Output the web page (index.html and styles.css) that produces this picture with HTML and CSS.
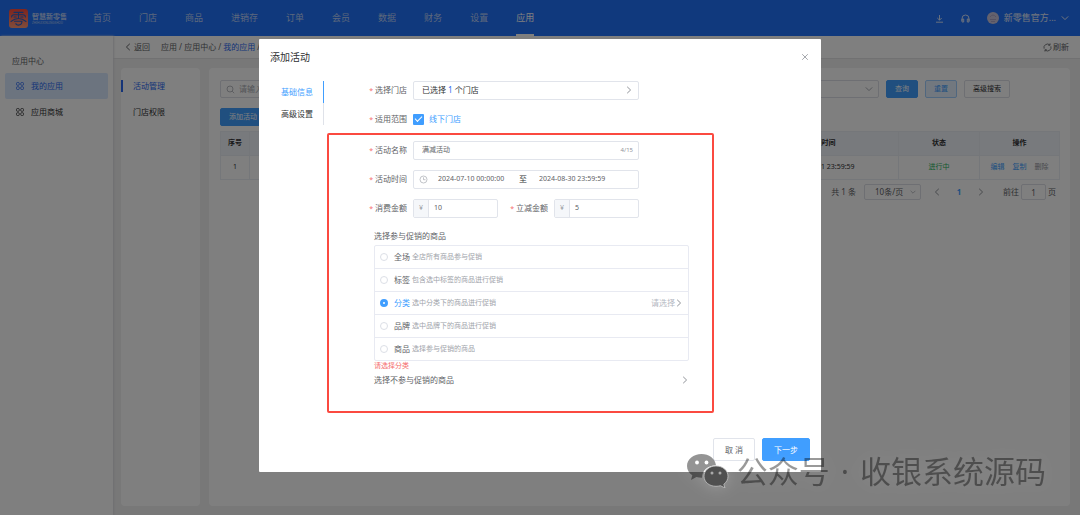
FILE: index.html
```html
<!DOCTYPE html>
<html lang="zh-CN">
<head>
<meta charset="utf-8">
<meta name="viewport" content="width=device-width, initial-scale=1">
<title>添加活动</title>
<link rel="stylesheet" href="styles.css">
</head>
<body>
<svg class="defs" width="0" height="0" aria-hidden="true">
  <symbol id="grid" viewBox="0 0 16 16"><g fill="none" stroke="currentColor" stroke-width="1.6"><rect x="1" y="1" width="5.6" height="5.6" rx="2"/><rect x="9.4" y="1" width="5.6" height="5.6" rx="2"/><rect x="1" y="9.4" width="5.6" height="5.6" rx="2"/><rect x="9.4" y="9.4" width="5.6" height="5.6" rx="2"/></g></symbol>
  <symbol id="right" viewBox="0 0 8 8"><path d="M2.2.8 5.6 4 2.2 7.2" fill="none" stroke="currentColor" stroke-width="1"/></symbol>
  <symbol id="left" viewBox="0 0 8 8"><path d="M5.8.8 2.4 4l3.4 3.2" fill="none" stroke="currentColor" stroke-width="1"/></symbol>
  <symbol id="down" viewBox="0 0 8 8"><path d="M.8 2.4 4 5.6l3.2-3.2" fill="none" stroke="currentColor" stroke-width="1"/></symbol>
</svg>

<div class="app">
  <header class="topbar">
    <div class="brand">
      <svg class="logo" viewBox="0 0 19 19"><defs><linearGradient id="lg" x1="0" y1="0" x2="0" y2="1"><stop offset="0" stop-color="#ff4a3c"/><stop offset="1" stop-color="#ff9a78"/></linearGradient></defs><rect width="19" height="19" rx="3" fill="url(#lg)"/><g fill="none" stroke="#2b62c4" stroke-width="1.1" stroke-linecap="round"><path d="M5 3.400h9M2.600 8Q2.600 5.800 5 5.800h9q2.400 0 2.400 2.200M9.500 3.400v5.800M5 8h2.200M11.800 8H14M2 12.500q3.500-3 7.500-3t7.500 3M5.500 12.300h7.500q-.2 3.800-3.500 3.800-2.600 0-2.600-1.600"/></g></svg>
      <div class="brand-text"><strong>智慧新零售</strong><small>ZHIHUIXINLINGSHOU</small></div>
    </div>
    <nav class="nav">
      <a href="#">首页</a><a href="#">门店</a><a href="#">商品</a><a href="#">进销存</a><a href="#">订单</a><a href="#">会员</a><a href="#">数据</a><a href="#">财务</a><a href="#">设置</a><a href="#" class="active">应用</a>
    </nav>
    <div class="tools">
      <svg class="tool" viewBox="0 0 9 9"><path d="M4.500 1v5M2.300 4l2.200 2.200L6.700 4M1 8.200h7" fill="none" stroke="currentColor" stroke-width=".9"/></svg>
      <svg class="tool" viewBox="0 0 9 9"><path d="M1 7V4.500a3.500 3.500 0 0 1 7 0V7M1 5h1.700v3H1zM6.300 5H8v3H6.300z" fill="none" stroke="currentColor" stroke-width=".9"/></svg>
      <button class="account" type="button">
        <svg class="avatar" viewBox="0 0 12 12"><circle cx="6" cy="6" r="6" fill="#c9c4dc"/><path d="M3 5q3-4 6 0M3 7.500h6M4 9.500h4" fill="none" stroke="#a59dc0" stroke-width=".8"/></svg>
        <span>新零售官方...</span>
        <svg class="chev" viewBox="0 0 8 8"><use href="#down"/></svg>
      </button>
    </div>
  </header>

  <div class="shell">
    <aside class="sidebar">
      <h2>应用中心</h2>
      <a href="#" class="active"><svg class="chev"><use href="#grid"/></svg>我的应用</a>
      <a href="#"><svg class="chev"><use href="#grid"/></svg>应用商城</a>
    </aside>
    <div class="page">
      <div class="crumbs">
        <a href="#" class="back"><svg class="chev"><use href="#left"/></svg>返回</a>
        <span class="trail">应用 / 应用中心 / <a href="#">我的应用</a> /</span>
        <button class="refresh" type="button"><svg viewBox="0 0 10 10"><path d="M1.200 6.300A4 4 0 0 1 7.500 2M8.800 3.700A4 4 0 0 1 2.500 8M7.800.500v2H5.800M2.200 9.500v-2h2" fill="none" stroke="currentColor" stroke-width=".9"/></svg>刷新</button>
      </div>
      <div class="panels">
        <nav class="submenu"><a href="#" class="active">活动管理</a><a href="#">门店权限</a></nav>
        <main class="content">
          <form class="search">
            <label class="search-box"><svg viewBox="0 0 9 9"><circle cx="4" cy="4" r="3" fill="none" stroke="currentColor" stroke-width=".8"/><path d="m6.200 6.200 2 2" stroke="currentColor" stroke-width=".8"/></svg><input type="text" placeholder="请输入" aria-label="搜索"></label>
            <div class="pick"><select aria-label="筛选"><option></option></select><svg class="chev"><use href="#down"/></svg></div>
            <button type="button" class="btn solid">查询</button>
            <button type="button" class="btn soft">重置</button>
            <button type="button" class="btn">高级搜索</button>
          </form>
          <button type="button" class="btn add">添加活动</button>
          <table>
            <colgroup><col class="c-no"><col><col class="c-time"><col class="c-state"><col class="c-ops"></colgroup>
            <thead><tr><th>序号</th><th></th><th>结束时间</th><th>状态</th><th>操作</th></tr></thead>
            <tbody><tr><td>1</td><td></td><td>2024-12-31 23:59:59</td><td class="ok">进行中</td><td class="ops"><a href="#">编辑</a><a href="#">复制</a><a href="#" class="del">删除</a></td></tr></tbody>
          </table>
          <div class="pager">
            <span>共 1 条</span>
            <div class="pick size"><select aria-label="每页条数"><option>10条/页</option></select><svg class="chev" viewBox="0 0 8 8"><use href="#down"/></svg></div>
            <button type="button" aria-label="上一页"><svg class="chev"><use href="#left"/></svg></button>
            <button type="button" class="current">1</button>
            <button type="button" aria-label="下一页"><svg class="chev"><use href="#right"/></svg></button>
            <label class="jump">前往<input type="text" value="1">页</label>
          </div>
        </main>
      </div>
    </div>
  </div>
</div>

<div class="overlay">
  <section class="dialog" role="dialog" aria-modal="true" aria-labelledby="dlg-title">
    <header class="dialog-head"><h1 id="dlg-title">添加活动</h1><button type="button" aria-label="关闭"><svg viewBox="0 0 8 8"><path d="m1.200 1.200 5.600 5.600m0-5.600L1.200 6.800" stroke="currentColor" stroke-width=".8"/></svg></button></header>
    <form class="dialog-main">
      <div class="dialog-body">
        <nav class="tabs"><a href="#" class="active">基础信息</a><a href="#">高级设置</a></nav>
        <div class="form">
          <div class="row"><label class="req" for="store">选择门店</label><button class="field store" id="store" type="button"><span>已选择 <b>1</b> 个门店</span><svg class="chev"><use href="#right"/></svg></button></div>
          <div class="row"><span class="req">适用范围</span><label class="check"><input type="checkbox" checked>线下门店</label></div>
          <div class="marked">
            <div class="row"><label class="req" for="name">活动名称</label><div class="field"><input id="name" type="text" value="满减活动"><span class="count">4/15</span></div></div>
            <div class="row"><label class="req" for="from">活动时间</label><div class="field range"><svg viewBox="0 0 9 9"><g fill="none" stroke="currentColor" stroke-width=".7"><circle cx="4.500" cy="4.500" r="3.500"/><path d="M4.500 2.300v2.400h2"/></g></svg><input id="from" type="text" value="2024-07-10 00:00:00"><span>至</span><input type="text" aria-label="结束时间" value="2024-08-30 23:59:59"></div></div>
            <div class="row"><label class="req" for="spend">消费金额</label><div class="field money"><span>¥</span><input id="spend" type="text" value="10"></div><label class="req second" for="off">立减金额</label><div class="field money"><span>¥</span><input id="off" type="text" value="5"></div></div>
            <fieldset class="goods">
              <legend>选择参与促销的商品</legend>
              <div class="options">
                <label><input type="radio" name="scope"><span>全场</span><small>全店所有商品参与促销</small></label>
                <label><input type="radio" name="scope"><span>标签</span><small>包含选中标签的商品进行促销</small></label>
                <label class="on"><input type="radio" name="scope" checked><span>分类</span><small>选中分类下的商品进行促销</small><em>请选择<svg class="chev"><use href="#right"/></svg></em></label>
                <label><input type="radio" name="scope"><span>品牌</span><small>选中品牌下的商品进行促销</small></label>
                <label><input type="radio" name="scope"><span>商品</span><small>选择参与促销的商品</small></label>
              </div>
              <p class="error">请选择分类</p>
              <button type="button" class="exclude">选择不参与促销的商品<svg class="chev"><use href="#right"/></svg></button>
            </fieldset>
          </div>
        </div>
      </div>
      <footer class="dialog-foot"><button type="button">取 消</button><button type="button" class="next">下一步</button></footer>
    </form>
  </section>
</div>

<div class="watermark">
  <svg viewBox="0 0 42 34"><path d="M14.500 0C6.500 0 0 5.200 0 12c0 3.700 2 7 5.300 9.300L4 26l5.400-2.900c1.800.5 3.500.7 5.600.7 0-7.600 6-12.500 14-12.600C28 4.500 22 0 14.500 0Z" fill="#000" fill-opacity=".42"/><circle cx="10" cy="8.500" r="1.900" fill="#fff"/><circle cx="19.500" cy="8.500" r="1.900" fill="#fff"/><path d="M29 12c-6.800 0-12 4.500-12 10.200S22 32.300 29 32.300c1.500 0 3-.2 4.500-.6L38 34l-1.200-3.700c2.700-2 4.200-4.900 4.200-8.100C41 16.500 35.800 12 29 12Z" fill="#505050" stroke="#c4c4c4" stroke-width=".8"/><circle cx="25" cy="19" r="1.500" fill="#aaa"/><circle cx="33" cy="19" r="1.500" fill="#aaa"/></svg>
  <p><span>公众号</span><span>·</span><span>收银系统源码</span></p>
</div>
</body>
</html>
```
FILE: styles.css
```css
* { box-sizing: border-box; }
body {
  margin: 0;
  color: #303133;
  font: 8px/10px "Noto Sans", "Noto Sans CJK SC", sans-serif;
}
a { color: inherit; text-decoration: none; }
h1, h2, p { margin: 0; font-weight: 400; }
button, input, select { margin: 0; padding: 0; border: 0; background: none; color: inherit; font: inherit; appearance: none; }
input { min-width: 0; outline: 0; }
svg { display: block; flex: none; }
.defs { position: absolute; }
.chev { width: 8px; height: 8px; }

.app { display: flex; flex-direction: column; min-height: 100vh; background: #f0f0f1; }
.topbar { display: flex; height: 36px; padding: 0 11px 0 9px; background: #2072fb; color: #b9cff8; }
.brand { display: flex; align-items: center; gap: 4px; width: 70px; }
.logo { width: 19px; height: 19px; }
.brand-text { display: flex; flex-direction: column; }
.brand-text strong { font-size: 7px; line-height: 9px; white-space: nowrap; }
.brand-text small { font-size: 3px; line-height: 4px; }
.nav { display: flex; gap: 28px; margin-left: 14px; font-size: 9px; line-height: 36px; white-space: nowrap; }
.nav .active { color: #fff; box-shadow: inset 0 -2px #fff; }
.tools { display: flex; align-items: center; gap: 17px; margin-left: auto; color: #e4ecfb; }
.tool { width: 9px; height: 9px; }
.account { display: flex; align-items: center; gap: 5px; font-size: 9px; }
.avatar { width: 12px; height: 12px; }

.shell { display: flex; flex: 1; }
.sidebar { width: 113px; padding: 20px 5px; background: #fff; box-shadow: 1px 0 2px #dcdce0; z-index: 1; }
.sidebar h2 { margin: 0 0 7px 7px; font-size: 8px; color: #606266; }
.sidebar a { display: flex; align-items: center; gap: 7px; height: 26px; padding-left: 11px; border-radius: 2px; }
.sidebar .active { background: #d9e8ff; color: #2a68f0; }
.page { display: flex; flex: 1; flex-direction: column; min-width: 0; }
.crumbs { display: flex; align-items: center; height: 23px; padding: 0 11px; background: #fff; border-bottom: 1px solid #e2e2e4; color: #606266; white-space: nowrap; }
.back { display: flex; align-items: center; gap: 2px; }
.trail { margin-left: 11px; }
.trail a { color: #2a68f0; }
.refresh { display: flex; align-items: center; gap: 1px; margin-left: auto; }
.refresh svg { width: 9px; height: 9px; }
.panels { display: flex; flex: 1; gap: 9px; padding: 9px 10px 9px 8px; }
.submenu, .content { border-radius: 4px; background: #fff; }
.submenu { width: 79px; padding-top: 12px; }
.submenu a { display: block; padding-left: 12px; margin-bottom: 14px; line-height: 12px; }
.submenu .active { padding-left: 10px; border-left: 2px solid #2a68f0; color: #2a68f0; }
.content { flex: 1; min-width: 0; padding: 12px 10px 12px 11px; }
.search { display: flex; gap: 7px; height: 18px; margin-right: 50px; }
.search-box, .pick { display: flex; align-items: center; border: 1px solid #dcdfe6; border-radius: 2px; color: #a8abb2; }
.search-box { gap: 4px; width: 140px; padding: 0 5px; }
.search-box svg { width: 9px; height: 9px; }
.search-box input { flex: 1; }
.search-box input::placeholder { color: #a8abb2; }
.pick { flex: 1; padding-right: 5px; }
.pick select { flex: 1; min-width: 0; outline: 0; }
.btn { height: 18px; padding: 0 8px; border: 1px solid #dcdfe6; border-radius: 2px; font-size: 7px; line-height: 10px; }
.solid, .add { border-color: #409eff; background: #409eff; color: #fff; }
.soft { border-color: #a0cfff; background: #e4f1ff; color: #409eff; }
.add { display: block; margin: 10px 0 5px; }
table { width: 100%; table-layout: fixed; border-collapse: collapse; font-size: 7px; }
th, td { height: 24px; padding: 0 0 1px; border: 1px solid #ebeef5; text-align: center; }
th { background: #f1f4fa; font-weight: 700; }
.c-no { width: 29px; } .c-time { width: 154px; } .c-state { width: 81px; } .c-ops { width: 80px; }
.ok { color: #28b45c; }
.ops a { margin: 0 4px; color: #409eff; }
.ops .del { color: #909399; }
.pager { display: flex; align-items: center; justify-content: flex-end; margin: 4px 4px 0; color: #606266; }
.pager .size { flex: none; width: 57px; height: 16px; margin: 0 12px 0 8px; padding-right: 4px; color: #a8abb2; }
.size select { padding-left: 10px; color: #606266; }
.size .chev { width: 6px; height: 6px; }
.pager button { width: 8px; margin-right: 14px; color: #909399; }
.pager .current { color: #409eff; font-weight: 700; }
.jump { display: flex; align-items: center; gap: 2px; margin-left: 4px; }
.jump input { width: 25px; height: 16px; border: 1px solid #dcdfe6; border-radius: 2px; text-align: center; }

.overlay { position: absolute; inset: 0; z-index: 2; display: grid; padding: 39px 259px 43px; background: rgba(0, 0, 0, .5); }
.dialog { display: flex; flex-direction: column; border-radius: 1px; background: #fff; color: #606266; }
.dialog-head { display: flex; align-items: center; justify-content: space-between; height: 36px; padding: 0 12px 0 11px; }
.dialog-head h1 { font-size: 10px; line-height: 12px; color: #303133; }
.dialog-head button { color: #909399; }
.dialog-head svg { width: 8px; height: 8px; }
.dialog-main { display: flex; flex: 1; flex-direction: column; justify-content: space-between; }
.dialog-body { display: flex; padding: 6px 107px 0 22px; }
.tabs { flex: none; line-height: 22px; color: #303133; }
.tabs a { display: block; padding-right: 10px; border-right: 1px solid #dfe2e9; }
.tabs .active { color: #409eff; border-color: #409eff; }
.form { flex: 1; margin-left: 3px; }
.row { display: flex; align-items: center; height: 18px; margin-bottom: 11px; padding-right: 75px; }
.req { flex: none; width: 80px; margin-right: 6px; text-align: right; }
.req::before { content: "* "; font-size: 7px; color: #f56c6c; }
.field { display: flex; flex: 1; align-items: center; min-width: 0; height: 19px; padding: 0 5px 0 8px; border: 1px solid #e1e4eb; border-radius: 2px; }
.store { justify-content: space-between; color: #303133; }
.store b { color: #2a68f0; font-weight: 400; }
.field input { flex: 1; width: 0; font-size: 7px; }
.count { font-size: 6px; color: #909399; }
.check { display: flex; align-items: center; gap: 5px; color: #409eff; }
.check input { display: grid; place-items: center; width: 11px; height: 11px; border-radius: 1px; background: #409eff; }
.check input::before { content: ""; width: 6px; height: 3px; margin-bottom: 2px; border: solid #fff; border-width: 0 0 1px 1px; transform: rotate(-45deg); }
.marked { margin-top: -6px; padding: 8px 0 28px; border-radius: 2px; outline: 2px solid #fb4a40; outline-offset: -2px; }
.range { padding: 0 20px 0 5px; }
.range svg { width: 9px; height: 9px; margin-right: 10px; color: #a8abb2; }
.range span { margin: 0 12px 0 2px; color: #303133; }
.money { padding: 0; }
.money span { display: grid; align-self: stretch; place-items: center; width: 15px; border-right: 1px solid #e1e4eb; background: #f5f7fa; color: #909399; font-size: 7px; }
.money input { padding-left: 5px; }
.second { width: 50px; }
.goods { min-width: 0; margin: 14px 25px 0 47px; padding: 0; border: 0; }
.goods legend { padding: 0; margin-bottom: 4px; }
.options { border: 1px solid #e8eaf2; border-radius: 2px; }
.options label { display: flex; align-items: center; height: 23px; padding: 0 5px 1px; border-bottom: 1px solid #e8eaf2; }
.options label:last-child { height: 22px; border: 0; }
.options input { width: 8px; height: 8px; margin-right: 6px; border: 1px solid #dcdfe6; border-radius: 50%; }
.options input:checked { border: 3px solid #409eff; }
.options small { margin-left: 2px; font-size: 7px; color: #a0a3aa; }
.options em { display: flex; align-items: center; margin-left: auto; font-style: normal; color: #b4b8c2; }
.on span { color: #409eff; }
.error { font-size: 7px; line-height: 9px; color: #f56c6c; }
.exclude { display: flex; align-items: center; justify-content: space-between; width: 100%; margin-top: 5px; }
.form .chev { color: #909399; }
.dialog-foot { display: flex; justify-content: flex-end; gap: 7px; padding: 0 11px 11px; }
.dialog-foot button { height: 23px; padding: 0 11px; border: 1px solid #e1e4eb; border-radius: 2px; }
.dialog-foot .next { border-color: #409eff; background: #409eff; color: #fff; }

.watermark { position: absolute; right: 34px; bottom: 21px; z-index: 3; display: flex; align-items: center; gap: 8px; color: rgba(0, 0, 0, .4); font: 31px/46px "Noto Sans", "Noto Sans CJK SC", sans-serif; white-space: nowrap; filter: drop-shadow(0 0 8px rgba(255, 255, 255, .25)); }
.watermark p { display: flex; gap: 11px; }
.watermark svg { width: 42px; height: 34px; }
```
